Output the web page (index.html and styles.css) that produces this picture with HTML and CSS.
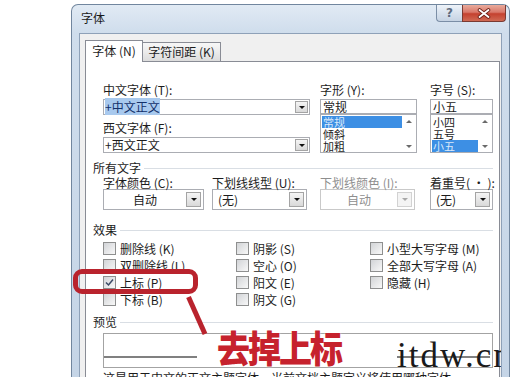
FILE: index.html
```html
<!DOCTYPE html>
<html lang="zh-CN">
<head>
<meta charset="utf-8">
<title>字体</title>
<link rel="stylesheet" href="styles.css">
</head>
<body>
<div class="window">
  <div class="titlebar">
    <span class="title">字体</span>
    <div class="caption-btns">
      <span class="cbtn help">?</span>
      <span class="cbtn close">
        <svg width="14" height="11" viewBox="0 0 14 11"><path d="M2.5 2 L11.5 9 M11.5 2 L2.5 9" stroke="#6e2219" stroke-width="3.6" stroke-linecap="round"/><path d="M2.5 2 L11.5 9 M11.5 2 L2.5 9" stroke="#fff" stroke-width="1.8" stroke-linecap="round"/></svg>
      </span>
    </div>
  </div>
  <div class="client">
    <div class="tabs">
      <div class="tab active">字体 (N)</div>
      <div class="tab">字符间距 (K)</div>
    </div>
    <div class="pane">
      <div class="fontsel">
        <div class="c1">
          <div class="lbl">中文字体 (T):</div>
          <div class="combo f"><span class="val"><span class="hl">+中文正文</span></span><span class="dd"><i></i></span></div>
          <div class="lbl mt">西文字体 (F):</div>
          <div class="combo f"><span class="val">+西文正文</span><span class="dd"><i></i></span></div>
        </div>
        <div class="c2">
          <div class="lbl">字形 (Y):</div>
          <div class="tbox">常规</div>
          <div class="list">
            <ul><li class="on">常规</li><li>倾斜</li><li>加粗</li></ul>
            <div class="sb"><i class="up"></i><i class="dn"></i></div>
          </div>
        </div>
        <div class="c3">
          <div class="lbl">字号 (S):</div>
          <div class="tbox">小五</div>
          <div class="list">
            <ul><li>小四</li><li>五号</li><li class="on">小五</li></ul>
            <div class="sb"><i class="up"></i><i class="dn"></i></div>
          </div>
        </div>
      </div>

      <div class="group g1">所有文字</div>
      <div class="attrs">
        <div class="a1">
          <div class="lbl">字体颜色 (C):</div>
          <div class="combo b"><span class="val center">自动</span><span class="dd"><i></i></span></div>
        </div>
        <div class="a2">
          <div class="lbl">下划线线型 (U):</div>
          <div class="combo b"><span class="val">(无)</span><span class="dd"><i></i></span></div>
        </div>
        <div class="a3 disabled">
          <div class="lbl">下划线颜色 (I):</div>
          <div class="combo b"><span class="val center">自动</span><span class="dd"><i></i></span></div>
        </div>
        <div class="a4">
          <div class="lbl">着重号( · ):</div>
          <div class="combo b"><span class="val">(无)</span><span class="dd"><i></i></span></div>
        </div>
      </div>

      <div class="group g2">效果</div>
      <div class="effects">
        <div class="cb"><span class="box"></span>删除线 (K)</div>
        <div class="cb"><span class="box"></span>双删除线 (L)</div>
        <div class="cb"><span class="box checked"><svg width="11" height="11" viewBox="0 0 11 11"><path d="M2 5.5 L4.5 8 L9 2.5" fill="none" stroke="#3b4a66" stroke-width="1.5"/></svg></span>上标 (P)</div>
        <div class="cb"><span class="box"></span>下标 (B)</div>
        <div class="cb"><span class="box"></span>阴影 (S)</div>
        <div class="cb"><span class="box"></span>空心 (O)</div>
        <div class="cb"><span class="box"></span>阳文 (E)</div>
        <div class="cb"><span class="box"></span>阴文 (G)</div>
        <div class="cb"><span class="box"></span>小型大写字母 (M)</div>
        <div class="cb"><span class="box"></span>全部大写字母 (A)</div>
        <div class="cb"><span class="box"></span>隐藏 (H)</div>
      </div>

      <div class="group g3">预览</div>
      <div class="preview">
        <span class="pline"></span>
        <span class="pline"></span>
      </div>
      <div class="desc">这是用于中文的正文主题字体。当前文档主题定义将使用哪种字体。</div>
    </div>
  </div>
</div>

<div class="mark-rect"></div>
<svg class="mark-line" width="34" height="44" viewBox="0 0 34 44"><line x1="8.5" y1="3" x2="25" y2="40" stroke="#b9232d" stroke-width="5"/></svg>
<div class="mark-text">去掉上标</div>
<div class="wm">itdw.cn</div>
</body>
</html>
```

FILE: styles.css
```css
* { box-sizing: border-box; }
html, body { margin: 0; padding: 0; }
body {
  width: 520px;
  height: 377px;
  overflow: hidden;
  background: #fff;
  position: relative;
  font-family: "Noto Sans CJK SC", "Noto Sans", sans-serif;
  font-size: 12px;
  color: #1c1c1c;
}

.window {
  margin: 4px 0 0 71px;
  width: 439px;
  height: 400px;
  border: 1px solid #71869e;
  border-bottom: none;
  border-radius: 7px 7px 0 0;
  background: linear-gradient(180deg, #e1eaf4 0, #cfddec 28px, #c4d4e6 100%);
  padding: 0 7px;
  display: flex;
  flex-direction: column;
}
.titlebar { height: 28px; display: flex; align-items: flex-start; }
.title { margin: 6px 0 0 2px; line-height: 14px; color: #1a1a1a; }
.caption-btns { margin-left: auto; margin-right: -4px; display: flex; }
.cbtn { height: 17px; display: flex; align-items: center; justify-content: center; }
.help {
  width: 26px;
  border: 1px solid #7b8ea6;
  border-top: none;
  border-right: none;
  border-radius: 0 0 0 4px;
  background: linear-gradient(#eef3f9, #d8e2ee 50%, #c6d3e3);
  color: #5d6b7e;
  font: bold 12px "DejaVu Sans", sans-serif;
}
.close {
  width: 44px;
  border: 1px solid #7a3a32;
  border-top: none;
  border-radius: 0 0 4px 0;
  background: linear-gradient(#e9ab9c, #d9786a 45%, #c4412f 55%, #d06a54);
}

.client {
  flex: 1;
  background: #f0f0f0;
  border: 1px solid #8ea1b8;
  border-bottom: none;
  padding: 6px 1px 0 5px;
  display: flex;
  flex-direction: column;
}
.tabs { display: flex; align-items: flex-end; margin-bottom: -1px; position: relative; z-index: 1; }
.tab {
  width: 79px;
  height: 19px;
  margin-bottom: 1px;
  margin-left: -1px;
  text-align: center;
  line-height: 18px;
  border: 1px solid #898c95;
  border-bottom: none;
  background: linear-gradient(#f7f7f7, #ebebeb 50%, #dcdcdc);
}
.tab.active {
  width: 58px;
  height: 22px;
  margin: 0;
  line-height: 20px;
  background: #fff;
  position: relative;
  z-index: 2;
}

.pane {
  flex: 1;
  background: #fff;
  border: 1px solid #898c95;
  padding: 21px 6px 0 7px;
}

.fontsel { display: flex; margin-left: 10px; }
.c1 { width: 207px; }
.c2 { width: 97px; margin-left: 10px; }
.c3 { width: 63px; margin-left: 13px; }
.lbl { line-height: 14px; height: 14px; margin-bottom: 2px; white-space: nowrap; }
.lbl.mt { margin-top: 6px; }

.combo { display: flex; align-items: center; border: 1px solid #abadb3; background: #fff; }
.combo.f { height: 16px; }
.val { flex: 1; padding-left: 1px; line-height: 14px; white-space: nowrap; }
.hl { background: #a8c9ee; color: #13306a; }
.dd {
  flex: none;
  width: 13px;
  height: 12px;
  margin-right: 1px;
  border: 1px solid #a4a4a4;
  background: linear-gradient(#f5f5f5, #d9d9d9);
  display: flex;
  align-items: center;
  justify-content: center;
}
.dd i { border-left: 3px solid transparent; border-right: 3px solid transparent; border-top: 3px solid #111; }

.tbox { height: 15px; border: 1px solid #abadb3; line-height: 13px; padding-left: 2px; }
.list { height: 39px; border: 1px solid #abadb3; display: flex; }
.list ul { list-style: none; margin: 0; padding: 1px 0 0 1px; flex: 1; }
.list li { font-size: 11px; line-height: 12px; height: 12px; padding-left: 1px; }
.list li.on { background: #3d8fe4; color: #dbe9f9; }
.sb { width: 14px; display: flex; flex-direction: column; align-items: center; justify-content: space-between; padding: 5px 0 4px; }
.sb .up { border-left: 3px solid transparent; border-right: 3px solid transparent; border-bottom: 3px solid #6a6a6a; }
.sb .dn { border-left: 3px solid transparent; border-right: 3px solid transparent; border-top: 3px solid #6a6a6a; }

.group { display: flex; align-items: center; line-height: 14px; height: 14px; white-space: nowrap; }
.group::after { content: ""; flex: 1; border-top: 1px solid #d9dee4; margin-left: 3px; }
.g1 { margin-top: 8px; }
.g2 { margin-top: 13px; }
.g3 { margin-top: 7px; }

.attrs { display: flex; margin: 1px 0 0 10px; }
.a1 { width: 101px; }
.a2 { width: 95px; margin-left: 8px; }
.a3 { width: 95px; margin-left: 13px; }
.a4 { width: 63px; margin-left: 15px; }
.attrs .lbl { line-height: 13px; height: 13px; margin-bottom: 0; }
.combo.b { height: 21px; }
.combo.b .val { line-height: 19px; padding-left: 5px; }
.combo.b .val.center { text-align: center; padding-left: 0; }
.combo.b .dd { width: 15px; height: 15px; margin-right: 2px; }
.disabled .lbl, .disabled .val { color: #8e8e8e; }
.disabled .combo { border-color: #c9c9c9; }
.disabled .dd { border-color: #d2d2d2; background: #f4f4f4; }
.disabled .dd i { border-top-color: #a8a8a8; }

.effects {
  margin: 3px 0 0 10px;
  display: grid;
  grid-template-columns: 133px 134px 1fr;
  grid-template-rows: repeat(4, 17px);
  grid-auto-flow: column;
}
.cb { display: flex; align-items: center; gap: 4px; white-space: nowrap; }
.box {
  flex: none;
  width: 13px;
  height: 13px;
  border: 1px solid #8e8f8f;
  background: linear-gradient(135deg, #d2d4d7, #f8f8f8);
  display: flex;
  align-items: center;
  justify-content: center;
}

.preview {
  margin: 4px 0 0 10px;
  height: 35px;
  border: 1px solid #a3a3a3;
  display: flex;
  align-items: flex-start;
  justify-content: space-between;
  padding: 22px 2px 0 0;
}
.pline { width: 93px; height: 2px; background: #808080; }
.desc { margin: 3px 0 0 10px; line-height: 14px; white-space: nowrap; }

.mark-rect {
  position: absolute;
  left: 73px;
  top: 269px;
  width: 125px;
  height: 25px;
  border: 5px solid #b9232d;
  border-radius: 9px;
}
.mark-line { position: absolute; left: 180px; top: 294px; }
.mark-text {
  position: absolute;
  left: 217px;
  top: 325px;
  font-size: 33px;
  font-weight: 900;
  line-height: 40px;
  letter-spacing: -2px;
  color: #c6222d;
  white-space: nowrap;
  transform: scaleY(1.12);
  transform-origin: top left;
  text-shadow: 0 0 2px #fff;
}
.wm {
  position: absolute;
  left: 397px;
  top: 338px;
  width: 104px;
  height: 36px;
  overflow: hidden;
  font-family: "Liberation Serif", serif;
  font-size: 35px;
  line-height: 36px;
  letter-spacing: 2px;
  color: #1a1a1a;
  white-space: nowrap;
}
```
